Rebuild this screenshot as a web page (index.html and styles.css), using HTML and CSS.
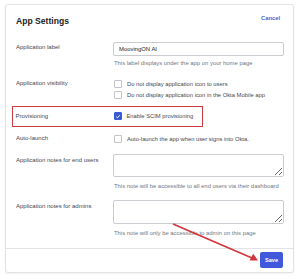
FILE: index.html
```html
<!DOCTYPE html>
<html lang="en">
<head>
    <meta charset="UTF-8">
    <title>App Settings</title>
    <link rel="stylesheet" href="styles.css">
</head>
<body>

<div class="card">
    <div class="card-head">
        <h2>App Settings</h2>
        <a class="cancel" href="#">Cancel</a>
    </div>

    <div class="card-body">
        <!-- Application label -->
        <div class="row">
            <div class="label">Application label</div>
            <div class="field">
                <input class="text-input" type="text" value="MoovingON AI">
                <p class="help">This label displays under the app on your home page</p>
            </div>
        </div>

        <!-- Visibility -->
        <div class="row row-check">
            <div class="label">Application visibility</div>
            <div class="field">
                <label class="check"><span class="box"></span>Do not display application icon to users</label>
                <label class="check"><span class="box"></span>Do not display application icon in the Okta Mobile app</label>
            </div>
        </div>

        <!-- Provisioning (highlighted) -->
        <div class="row row-check highlight">
            <div class="label">Provisioning</div>
            <div class="field">
                <label class="check"><span class="box checked">
                    <svg viewBox="0 0 8 8" width="7" height="7"><path d="M1.6 4.1 L3.3 5.7 L6.4 2.3" fill="none" stroke="#fff" stroke-width="1.3"/></svg>
                </span>Enable SCIM provisioning</label>
            </div>
        </div>

        <!-- Auto-launch -->
        <div class="row row-check">
            <div class="label">Auto-launch</div>
            <div class="field">
                <label class="check"><span class="box"></span>Auto-launch the app when user signs into Okta.</label>
            </div>
        </div>

        <!-- Notes -->
        <div class="row row-notes">
            <div class="label">Application notes for end users</div>
            <div class="field">
                <textarea class="notes"></textarea>
                <p class="help help-notes">This note will be accessible to all end users via their dashboard</p>
            </div>
        </div>

        <div class="row row-notes">
            <div class="label">Application notes for admins</div>
            <div class="field">
                <textarea class="notes notes-admin"></textarea>
                <p class="help help-notes">This note will only be accessible to admin on this page</p>
            </div>
        </div>
    </div>

    <div class="card-foot">
        <button class="save">Save</button>
    </div>
</div>

<!-- annotation arrow -->
<svg class="arrow" width="300" height="279" viewBox="0 0 300 279">
    <line x1="173" y1="224" x2="252" y2="258" stroke="#d3343b" stroke-width="1.6"/>
    <path d="M258 260.5 L249.5 260.5 L253.2 253.8 Z" fill="#d3343b"/>
</svg>

</body>
</html>
```

FILE: styles.css
```css
body {
    margin: 0;
    background-color: #fff;
    font-family: "Liberation Sans", Arial, sans-serif;
    color: #2f3238;
}
.card {
    margin: 4px 6px 6px 5px;
    border: 1px solid #e1e2e5;
    border-radius: 3px;
    box-shadow: 0 1px 2px rgba(0, 0, 0, 0.06);
    background-color: #fff;
}
.card-head {
    height: 30px;
    display: flex;
    align-items: center;
    justify-content: space-between;
    padding: 0 13px 0 10px;
}
.card-head h2 {
    margin: 0;
    font-size: 8.6px;
    font-weight: 600;
    color: #1d1d21;
    position: relative;
    top: 1px;
}
.cancel {
    font-size: 5.8px;
    font-weight: bold;
    color: #4f5fc9;
    text-decoration: none;
    position: relative;
    top: -2px;
}
.card-body {
    padding: 7px 10px 11px 10px;
}
.row {
    display: flex;
    font-size: 5.8px;
}
.label {
    width: 97px;
    flex-shrink: 0;
    line-height: 8px;
    padding-top: 1px;
    font-size: 6px;
    color: #44474e;
}
.field {
    flex: 1;
    min-width: 0;
}
.text-input {
    display: block;
    box-sizing: border-box;
    width: 171px;
    height: 14px;
    margin: 0;
    padding: 0 5px;
    border: 1px solid #c9cbd0;
    border-radius: 2px;
    font-family: inherit;
    font-size: 5.9px;
    color: #1d1d21;
}
.help {
    margin: 3px 0 0 1px;
    line-height: 8px;
    font-size: 5.9px;
    color: #74777f;
}
.row-check {
    margin-top: 11px;
}
.row-check .label {
    line-height: 11px;
    padding-top: 0;
}
.check {
    display: flex;
    align-items: center;
    height: 11px;
    color: #44474e;
}
.box {
    width: 6px;
    height: 6px;
    margin: 0 5px 0 1px;
    border: 1px solid #c2c4c9;
    border-radius: 1px;
    display: flex;
    align-items: center;
    justify-content: center;
}
.box.checked {
    background-color: #3a5ad6;
    border-color: #3a5ad6;
}
.highlight {
    box-sizing: border-box;
    width: 191px;
    height: 21px;
    margin: 6px 0 0 -4px;
    padding: 3.5px 0 0 2.5px;
    border: 1.5px solid #cf3a3f;
}
.row-check + .row-check:not(.highlight) {
    margin-top: 6px;
}
.row-notes {
    margin-top: 10px;
}
.row-notes .label {
    padding-top: 2px;
}
.notes {
    display: block;
    box-sizing: border-box;
    width: 171px;
    height: 23px;
    margin: 0;
    border: 1px solid #c9cbd0;
    border-radius: 2px;
    font-family: inherit;
}
.notes-admin {
    height: 24px;
}
.help-notes {
    margin-top: 5px;
}
.card-foot {
    border-top: 1px solid #e1e2e5;
    display: flex;
    justify-content: flex-end;
    padding: 3px 10px 4px 0;
}
.save {
    width: 23px;
    height: 16px;
    padding: 0;
    border: none;
    border-radius: 2px;
    background-color: #4059dc;
    color: #fff;
    font-family: inherit;
    font-size: 5.6px;
    font-weight: bold;
}
.arrow {
    position: absolute;
    left: 0;
    top: 0;
    pointer-events: none;
}
```
